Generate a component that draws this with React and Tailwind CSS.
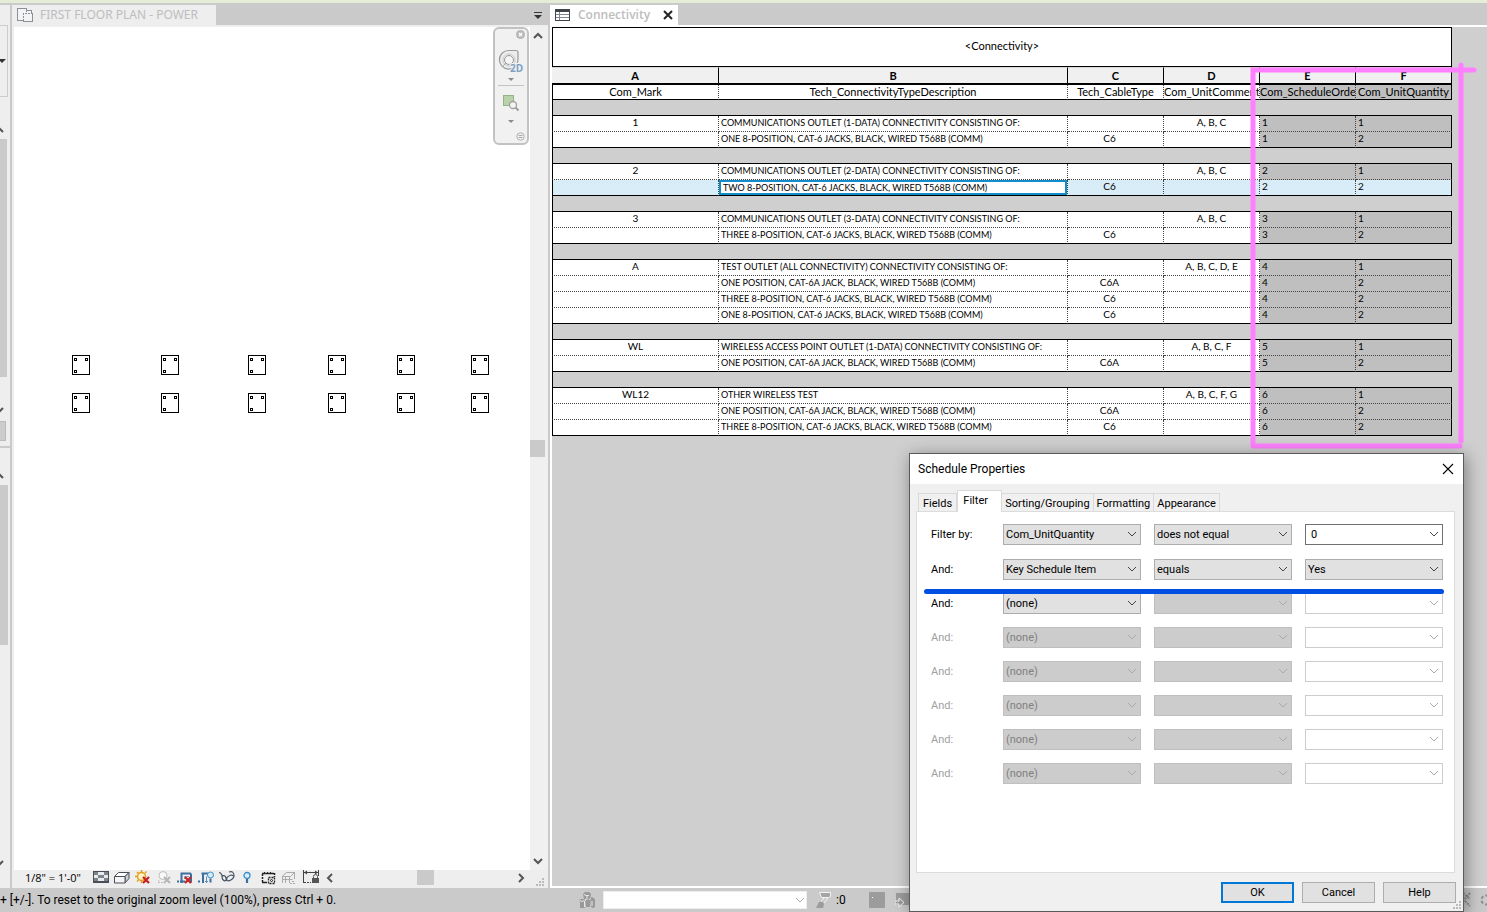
import React, { useState } from 'react';
import clsx from 'clsx';

const FIELDS = [
  { letter: 'A', name: 'Com_Mark' },
  { letter: 'B', name: 'Tech_ConnectivityTypeDescription' },
  { letter: 'C', name: 'Tech_CableType' },
  { letter: 'D', name: 'Com_UnitComment' },
  { letter: 'E', name: 'Com_ScheduleOrde' },
  { letter: 'F', name: 'Com_UnitQuantity' },
];

const GROUPS = [
  [
    ['1', 'COMMUNICATIONS OUTLET (1-DATA) CONNECTIVITY CONSISTING OF:', '', 'A, B, C', '1', '1'],
    ['', 'ONE 8-POSITION, CAT-6 JACKS, BLACK, WIRED T568B (COMM)', 'C6', '', '1', '2'],
  ],
  [
    ['2', 'COMMUNICATIONS OUTLET (2-DATA) CONNECTIVITY CONSISTING OF:', '', 'A, B, C', '2', '1'],
    ['', 'TWO 8-POSITION, CAT-6 JACKS, BLACK, WIRED T568B (COMM)', 'C6', '', '2', '2'],
  ],
  [
    ['3', 'COMMUNICATIONS OUTLET (3-DATA) CONNECTIVITY CONSISTING OF:', '', 'A, B, C', '3', '1'],
    ['', 'THREE 8-POSITION, CAT-6 JACKS, BLACK, WIRED T568B (COMM)', 'C6', '', '3', '2'],
  ],
  [
    ['A', 'TEST OUTLET (ALL CONNECTIVITY) CONNECTIVITY CONSISTING OF:', '', 'A, B, C, D, E', '4', '1'],
    ['', 'ONE POSITION, CAT-6A JACK, BLACK, WIRED T568B (COMM)', 'C6A', '', '4', '2'],
    ['', 'THREE 8-POSITION, CAT-6 JACKS, BLACK, WIRED T568B (COMM)', 'C6', '', '4', '2'],
    ['', 'ONE 8-POSITION, CAT-6 JACKS, BLACK, WIRED T568B (COMM)', 'C6', '', '4', '2'],
  ],
  [
    ['WL', 'WIRELESS ACCESS POINT OUTLET (1-DATA) CONNECTIVITY CONSISTING OF:', '', 'A, B, C, F', '5', '1'],
    ['', 'ONE POSITION, CAT-6A JACK, BLACK, WIRED T568B (COMM)', 'C6A', '', '5', '2'],
  ],
  [
    ['WL12', 'OTHER WIRELESS TEST', '', 'A, B, C, F, G', '6', '1'],
    ['', 'ONE POSITION, CAT-6A JACK, BLACK, WIRED T568B (COMM)', 'C6A', '', '6', '2'],
    ['', 'THREE 8-POSITION, CAT-6 JACKS, BLACK, WIRED T568B (COMM)', 'C6', '', '6', '2'],
  ],
];

const OUTLETS = [58, 147, 234, 314, 383, 457];

const FILTERS = [
  { label: 'Filter by:', field: 'Com_UnitQuantity', rule: 'does not equal', value: '0', editable: true },
  { label: 'And:', field: 'Key Schedule Item', rule: 'equals', value: 'Yes' },
  { label: 'And:', field: '(none)' },
  { label: 'And:', field: '(none)', disabled: true },
  { label: 'And:', field: '(none)', disabled: true },
  { label: 'And:', field: '(none)', disabled: true },
  { label: 'And:', field: '(none)', disabled: true },
  { label: 'And:', field: '(none)', disabled: true },
];

const Chevron = ({ dir = 'down', className }) => {
  const paths = {
    down: 'M1 3l4 4 4-4',
    up: 'M1 7l4-4 4 4',
    left: 'M7 1L3 5l4 4',
    right: 'M3 1l4 4-4 4',
  };
  return (
    <svg viewBox="0 0 10 10" className={clsx('w-2.5 h-2.5 shrink-0', className)} fill="none" stroke="currentColor">
      <path d={paths[dir]} />
    </svg>
  );
};

const Palette = () => (
  <aside className="w-3 shrink-0 flex flex-col items-start bg-[#eeeeee] border-r-2 border-[#cacaca] overflow-hidden text-[#555555]">
    <div className="mt-5 w-2 h-[72px] shrink-0 border border-l-0 border-[#cccccc] flex items-center">
      <svg viewBox="0 0 6 4" className="w-1.5 h-1 shrink-0"><path d="M0 0h6L2 4 0 2z" fill="#333" /></svg>
    </div>
    <div className="h-[42px] shrink-0 flex items-end pb-1">
      <Chevron dir="up" className="-ml-1.5 stroke-2" />
    </div>
    <div className="w-[7px] h-[238px] shrink-0 bg-[#cacaca]" />
    <div className="h-11 shrink-0 flex items-end pb-1.5">
      <Chevron className="-ml-1.5 stroke-2" />
    </div>
    <div className="w-1.5 h-5 shrink-0 bg-[#cccccc] border border-l-0 border-[#bbbbbb]" />
    <div className="mt-[5px] w-full h-0.5 shrink-0 bg-[#cacaca]" />
    <div className="h-[37px] shrink-0 flex items-end pb-1">
      <Chevron dir="up" className="-ml-1.5 stroke-2" />
    </div>
    <div className="w-2 h-[160px] shrink-0 bg-[#cacaca]" />
    <div className="mt-auto pb-5">
      <Chevron className="-ml-1.5 stroke-2" />
    </div>
  </aside>
);

const Outlet = () => (
  <svg viewBox="0 0 18 20" className="w-[18px] h-5" fill="none" stroke="#000" shapeRendering="crispEdges">
    <rect x="0.5" y="0.5" width="17" height="19" />
    <path d="M2.5 3.5h2v2h-2zM13.5 3.5h2v2h-2zM2.5 15.5h2v2h-2z" />
  </svg>
);

const NavigationBar = () => (
  <div className="absolute right-px top-0 w-9 h-[118px] rounded-md border-2 border-[#c2c2c2] bg-[#f1f1f1] flex flex-col items-center">
    <button aria-label="Close navigation bar" className="self-end mr-0.5 mt-px">
      <svg viewBox="0 0 9 9" className="w-[9px] h-[9px]">
        <circle cx="4.5" cy="4.5" r="4" fill="#bdbdbd" stroke="#b0b0b0" />
        <path d="M3 3l3 3M6 3L3 6" stroke="#fff" strokeWidth="1.2" />
      </svg>
    </button>
    <button aria-label="Steering wheel" className="mt-2.5">
      <svg viewBox="0 0 26 26" className="w-[26px] h-[26px]">
        <path d="M11 1.5h7a2 2 0 0 1 2 2V11a9.3 9.3 0 1 1-9-9.5z" fill="#ececec" stroke="#999999" strokeWidth="1.2" />
        <circle cx="11" cy="11" r="6" fill="#f8f8f8" stroke="#c8c8c8" />
        <circle cx="11" cy="11" r="4.5" fill="#f5f5f5" stroke="#929292" />
        <path d="M8 14l-3.5 3.5" stroke="#aaaaaa" />
        <text x="12" y="23" fontSize="10" fontWeight="700" fontFamily="Open Sans, sans-serif" fill="#7ea0c2" stroke="#f1f1f1" strokeWidth="2" paintOrder="stroke">2D</text>
      </svg>
    </button>
    <svg viewBox="0 0 6 3" className="mt-[3px] w-1.5 h-[3px] shrink-0"><path d="M0 0h6L3 3z" fill="#8a8a8a" /></svg>
    <div className="mt-1 w-[26px] border-t border-[#c2c2c2]" />
    <button aria-label="Zoom region" className="mt-2">
      <svg viewBox="0 0 18 18" className="w-[18px] h-[18px]">
        <rect x="1.5" y="1.5" width="10" height="10" fill="#b9d2aa" stroke="#93b583" />
        <path d="M13.5 13.5l3 3" stroke="#999" strokeWidth="1.8" />
        <circle cx="11" cy="11" r="3.5" fill="#f4f4f4" stroke="#a0a0a0" strokeWidth="1.3" />
      </svg>
    </button>
    <svg viewBox="0 0 6 3" className="mt-2 w-1.5 h-[3px] shrink-0"><path d="M0 0h6L3 3z" fill="#8a8a8a" /></svg>
    <button aria-label="Navigation bar options" className="self-end mr-0.5 mt-auto mb-0.5">
      <svg viewBox="0 0 9 9" className="w-[9px] h-[9px]">
        <circle cx="4.5" cy="4.5" r="3.7" fill="#f1f1f1" stroke="#b0b0b0" />
        <path d="M2.5 3.5h4M2.5 5.5h4" stroke="#a8a8a8" />
      </svg>
    </button>
  </div>
);

const VIEW_TOOLS = [
  {
    name: 'Detail level',
    art: (
      <g shapeRendering="crispEdges">
        <rect x="0.5" y="1.5" width="15" height="11" fill="#e8ebee" stroke="#4a4f57" />
        <path d="M1 2h4v3H1zM11 2h4v3h-4zM5 5h6v3H5zM1 8h4v3H1zM11 8h4v3h-4z" fill="#7d848c" />
        <path d="M1 11.5h14" stroke="#4a4f57" />
      </g>
    ),
  },
  {
    name: 'Visual style',
    art: (
      <g stroke="#4a4f57" strokeLinejoin="round">
        <path d="M0.500 6.500l4-4h10.500l-4 4z" fill="#fff" />
        <path d="M11 6.500l4-4v6l-4 4.500z" fill="#cdd1d6" />
        <path d="M0.500 6.500H11v6.500H0.500z" fill="#f4f4f4" />
      </g>
    ),
  },
  {
    name: 'Sun path off',
    art: (
      <>
        <circle cx="6.5" cy="6.5" r="4" fill="#fff3c4" stroke="#e0a020" strokeWidth="1.5" />
        <path d="M6.500 0v2M0 6.500h2M2 2l1.500 1.500M11.500 1.500L10 3M2 11.500L3.500 10M6.500 11v2" stroke="#e0a020" strokeWidth="1.5" />
        <path d="M8 7l6 6M14 7l-6 6" stroke="#c9201f" strokeWidth="2.2" />
      </>
    ),
  },
  {
    name: 'Shadows off',
    art: (
      <g fill="none" stroke="#bdbdbd">
        <circle cx="7" cy="5.500" r="4" fill="#f8f8f8" />
        <path d="M2 12.500h7M2 10l2 2" strokeDasharray="2 1" />
        <path d="M8 7l6 6M14 7l-6 6" stroke="#b4b4b4" strokeWidth="1.8" />
      </g>
    ),
  },
  {
    name: 'Crop view off',
    art: (
      <>
        <path d="M0 11.500h2M14 3.500v9" fill="none" stroke="#3c6f9e" strokeWidth="2" />
        <path d="M4.500 13V3.500H14M3 11.500h5" fill="none" stroke="#3c6f9e" strokeWidth="2" />
        <path d="M7.500 9V6.500H12" fill="none" stroke="#7fa6c8" />
        <path d="M8 7l6 6M14 7l-6 6" stroke="#c9201f" strokeWidth="2.2" />
      </>
    ),
  },
  {
    name: 'Show crop region',
    art: (
      <>
        <path d="M0 11.500h2M5 13V3M3.500 3.500H10M4 11.500h2" fill="none" stroke="#3c6f9e" strokeWidth="2" />
        <path d="M8.500 13V6.500M7 11.500h3" fill="none" stroke="#5f8fb8" />
        <circle cx="12.5" cy="5" r="3" fill="#d5ecfb" stroke="#3f8cc4" />
        <path d="M12.500 8.500v4" stroke="#3c6f9e" strokeWidth="2" />
      </>
    ),
  },
  {
    name: 'Temporary hide/isolate',
    art: (
      <g fill="#e9f2f7" stroke="#48525c" strokeWidth="1.2">
        <path d="M0 2.500c3 0 2 3 4 4M10 2c3-1 5 0 5 4" fill="none" />
        <path d="M3 6.500c2-2 5 0 4 4-2 1-4-1-4-4zM7.500 8.500c2-4 6-4 7.500-2-1 3-5 5-7 4z" />
      </g>
    ),
  },
  {
    name: 'Reveal hidden elements',
    art: (
      <>
        <circle cx="7" cy="5.500" r="3" fill="#d9effc" stroke="#3c8cc8" strokeWidth="1.3" />
        <path d="M7 9v4" stroke="#3c6f9e" strokeWidth="2.2" />
      </>
    ),
  },
  {
    name: 'Worksharing display off',
    art: (
      <g fill="none" stroke="#222">
        <path d="M1 3.500h12M1 12.500h5" strokeWidth="1.5" />
        <path d="M1.500 4v9M13.500 3v4" strokeDasharray="2 1" strokeWidth="1.5" />
        <path d="M3.500 2v2M6.500 2v2M9.500 2v2" />
        <rect x="7.5" y="7.5" width="6" height="6" strokeDasharray="2 1" strokeWidth="1.3" />
        <circle cx="10.5" cy="10.5" r="1" />
      </g>
    ),
  },
  {
    name: 'Analytical model',
    art: (
      <g fill="none" stroke="#aaaaaa">
        <path d="M0.500 13V6l4-3.500h8.500M0.500 6.500h8l4-4M3.500 13V6.500M7.500 13V6.500M0.500 9.500h10M12.500 2v7" />
        <path d="M8 13.500h6M10 11.500h3" strokeDasharray="2 1" />
      </g>
    ),
  },
  {
    name: 'Reveal constraints',
    art: (
      <>
        <path d="M0.500 0v13M15.500 0v6" stroke="#444" />
        <path d="M1 2.500h14" stroke="#444" />
        <path d="M1 12.500h7" stroke="#444" strokeDasharray="2 1" />
        <path d="M1 2.500l3-2v4zM15 2.500l-3-2v4z" fill="#444" />
        <path d="M10.500 8V6.500a2 2 0 0 1 4 0V8" fill="none" stroke="#555" />
        <rect x="9" y="8" width="7" height="5" fill="#555" />
      </>
    ),
  },
];

const Grip = ({ className }) => (
  <svg viewBox="0 0 9 9" className={clsx('w-[9px] h-[9px]', className)} fill="#bbbbbb">
    <path d="M7 1h2v2H7zM4 4h2v2H4zM7 4h2v2H7zM1 7h2v2H1zM4 7h2v2H4zM7 7h2v2H7z" />
  </svg>
);

const FloorPlanView = () => (
  <section className="w-[536px] shrink-0 flex flex-col bg-[#eeeeee]">
    <div className="h-5 flex items-center bg-[#cacaca]">
      <div className="h-full w-[204px] flex items-center gap-[7px] pl-[5px] bg-[#eeeeee]">
        <svg viewBox="0 0 16 14" className="w-4 h-3.5" stroke="#8c8f94" fill="#f3f4f6" shapeRendering="crispEdges">
          <path d="M0.5 0.5h9v1.5h5v3h1v8.5h-9v-1h-6z" />
          <path d="M6.5 13V5.5h9M9.5 2v3.5" strokeDasharray="2 1" fill="none" />
        </svg>
        <span className="font-['Noto_Sans','Open_Sans',sans-serif] text-[12px] leading-4 text-[#bdbdbd] whitespace-nowrap">FIRST FLOOR PLAN - POWER</span>
      </div>
      <button aria-label="Tab list" className="ml-auto mr-1.5">
        <svg viewBox="0 0 8 7" className="w-2 h-[7px]" fill="#333"><path d="M0 0h8v1H0zM0 3h8L4 7z" /></svg>
      </button>
    </div>
    <div className="flex-1 min-h-0 flex pt-0.5 pl-0.5">
      <div className="relative flex-1 bg-white">
        {OUTLETS.map((x) => (
          <div key={x} className="absolute top-[328px] flex flex-col gap-[18px]" style={{ left: x }}>
            <Outlet />
            <Outlet />
          </div>
        ))}
        <NavigationBar />
      </div>
      <div className="w-[18px] flex flex-col items-center bg-[#f0f0f0] text-[#555555]">
        <Chevron dir="up" className="mt-1 mr-0.5 stroke-2" />
        <div className="mt-[399px] mr-[3px] w-[15px] h-[17px] bg-[#cacaca]" />
        <Chevron className="mt-auto mb-1 mr-0.5 stroke-2" />
      </div>
    </div>
    <div className="h-[18px] flex items-start pl-[13px]">
      <span className="w-[68px] text-[11px] leading-4 whitespace-nowrap font-['Open_Sans','Noto_Sans',sans-serif]">1/8" = 1'-0"</span>
      <div className="flex gap-[5px]">
        {VIEW_TOOLS.map((tool) => (
          <button key={tool.name} aria-label={tool.name}>
            <svg viewBox="0 0 16 16" className="w-4 h-4">{tool.art}</svg>
          </button>
        ))}
      </div>
      <div className="flex-1 h-full flex items-center pl-1.5 text-[#555555]">
        <Chevron dir="left" className="mb-0.5 stroke-2" />
        <div className="ml-[82px] self-start w-[17px] h-[15px] bg-[#cacaca]" />
        <Chevron dir="right" className="mb-0.5 ml-auto mr-[9px] stroke-2" />
        <Grip className="mt-1 mr-1" />
      </div>
    </div>
  </section>
);

const cellAlign = ['text-center', 'text-left', 'text-center', 'text-center', 'text-left', 'text-left'];

const ScheduleTable = () => (
  <table className="w-[900px] table-fixed border-separate border-spacing-0 font-[Lato,Carlito,sans-serif] text-[10px] leading-[13px] text-black">
    <caption className="h-10 bg-white border border-black text-center text-[11px] leading-9">&lt;Connectivity&gt;</caption>
    <colgroup>
      <col className="w-[167px]" />
      <col className="w-[349px]" />
      <col className="w-24" />
      <col className="w-24" />
      <col className="w-24" />
      <col className="w-24" />
    </colgroup>
    <thead>
      <tr className="h-[18px]">
        {FIELDS.map((f) => (
          <th key={f.letter} className="p-0 bg-[#f0f0f0] border-t border-t-[#d8d8d8] border-r border-r-black border-b-2 border-b-black text-[11px] leading-[14px] font-bold">
            {f.letter}
          </th>
        ))}
      </tr>
      <tr className="h-[15px]">
        {FIELDS.map((f, i) => (
          <th
            key={f.name}
            className={clsx(
              'p-0 border-b border-b-black border-r text-[11px] leading-[14px] font-normal whitespace-nowrap overflow-hidden',
              i === 0 && 'border-l border-l-black',
              i === 5 ? 'border-r-black' : 'border-r-[#444444] [border-right-style:dotted]',
              i > 3 ? 'bg-[#bfbfbf]' : 'bg-white',
            )}
          >
            {f.name}
          </th>
        ))}
      </tr>
    </thead>
    {GROUPS.map((rows, g) => (
      <tbody key={g}>
        <tr className="h-4">
          <td colSpan={6} className="p-0 h-4 border-l border-b border-black" />
        </tr>
        {rows.map((row, r) => {
          const selected = g === 1 && r === 1;
          const last = r === rows.length - 1;
          return (
            <tr key={r} className="h-4">
              {row.map((text, i) => (
                <td
                  key={i}
                  className={clsx(
                    'p-0 h-4 align-top border-r border-b whitespace-nowrap overflow-hidden',
                    cellAlign[i],
                    i === 0 && 'border-l border-l-black',
                    i === 1 && 'text-[9px] leading-[14px]',
                    i === 2 && 'pr-3',
                    i === 5 ? 'border-r-black' : 'border-r-[#444444] [border-right-style:dotted]',
                    last ? 'border-b-black' : 'border-b-[#444444] [border-bottom-style:dotted]',
                    selected ? 'bg-[#d9edf9]' : i > 3 ? 'bg-[#bfbfbf]' : 'bg-white',
                    (i === 1 || i > 3) && !(selected && i === 1) && 'pl-0.5',
                  )}
                >
                  {selected && i === 1 ? (
                    <div className="h-[15px] leading-3 pl-0.5 bg-white border-2 border-[#118dc9]">{text}</div>
                  ) : (
                    text
                  )}
                </td>
              ))}
            </tr>
          );
        })}
      </tbody>
    ))}
  </table>
);

const ScheduleView = () => (
  <section className="flex-1 min-w-0 flex flex-col border-l-2 border-[#cacaca]">
    <div className="h-5 flex bg-[#cacaca]">
      <div className="w-32 flex items-center bg-white pl-[5px] pr-1">
        <svg viewBox="0 0 15 12" className="w-[15px] h-3" shapeRendering="crispEdges">
          <rect x="0.5" y="0.5" width="14" height="11" fill="#fff" stroke="#3f444c" />
          <path d="M0 0h15v3H0z" fill="#3f444c" />
          <path d="M1 5.5h13M1 8.5h13M4.5 3v8" stroke="#7f8791" />
        </svg>
        <span className="ml-2 font-['Open_Sans','Noto_Sans',sans-serif] text-[12px] leading-4 font-semibold text-[#bdbdbd]">Connectivity</span>
        <button aria-label="Close tab" className="ml-auto">
          <svg viewBox="0 0 12 12" className="w-3 h-3" stroke="#222" strokeWidth="2"><path d="M2 2l8 8M10 2l-8 8" /></svg>
        </button>
      </div>
    </div>
    <div className="flex-1 min-h-0 border-t-2 border-l-2 border-b-2 border-white bg-[#cfcfcf]">
      <div className="relative w-[900px]">
        <ScheduleTable />
        <svg viewBox="0 0 930 390" className="absolute left-0 top-[34px] w-[930px] h-[390px] pointer-events-none" fill="none" stroke="#ff80ff" strokeWidth="5" strokeLinecap="round">
          <path d="M701 385V9H922M909 4V380M701 385H908" />
        </svg>
      </div>
    </div>
  </section>
);

const StatusBar = () => (
  <footer className="h-6 shrink-0 flex items-center bg-[#cacaca] whitespace-nowrap overflow-hidden">
    <span className="w-[579px] shrink-0 text-[12px] leading-4">+ [+/-]. To reset to the original zoom level (100%), press Ctrl + 0.</span>
    <svg viewBox="0 0 16 16" className="w-4 h-4 shrink-0" fill="#999999">
      <path d="M4 2l2-2h4l2 2-1 5H5zM0 8l2-1h3l1 1v8H1V9zM6 8l5-1v8H7zM11 6l2-1 3 2v8l-2 1-2-1z" />
      <path d="M5 2.500l2 1h3M8 4v3M1 8.500l2 1 2-1M5.500 9v6M11.500 6l-1 2M13 9v5M7 7l-1 2" fill="none" stroke="#f0f0f0" strokeWidth="0.9" />
    </svg>
    <select aria-label="Active workset" className="ml-2 w-[204px] h-[18px] shrink-0 appearance-none bg-white border border-[#eeeeee]" />
    <Chevron className="-ml-3 mr-2 text-[#aaaaaa]" />
    <svg viewBox="0 0 16 16" className="ml-[3px] w-4 h-4 shrink-0" fill="#9c9c9c" stroke="#f4f4f4">
      <path d="M0 16l3-6 3-1 2 3-1 4z" stroke="none" />
      <path d="M3.500 0.500h11v4l-2 1h-7zM8 6l-3 4M12 6l-4 5" fill="#a5a5a5" />
    </svg>
    <span className="ml-1 w-[33px] text-[12px] leading-4">:0</span>
    <svg viewBox="0 0 16 16" className="w-4 h-4 shrink-0" fill="#9c9c9c"><rect width="16" height="16" rx="1" /><path d="M3 5h1v1H3z" fill="#fff" /></svg>
    <svg viewBox="0 0 16 16" className="ml-2.5 w-4 h-4 shrink-0" fill="#9c9c9c">
      <path d="M1 1h15v12H1z" />
      <path d="M0 9h4V6l5 4.500L4 15v-3H0z" stroke="#f4f4f4" />
    </svg>
    <svg viewBox="0 0 28 16" className="ml-auto w-7 h-4 shrink-0" fill="none" stroke="#909090" strokeWidth="2">
      <path d="M4 1l7 6M11 1L4 9M6 9l5 5" strokeDasharray="2 1" />
      <circle cx="27" cy="8" r="4.5" strokeDasharray="3 2" />
    </svg>
  </footer>
);

const Combo = ({ label, value = '', disabled, editable }) => {
  const box = clsx(
    'block w-[138px] h-[21px] border text-[11px] leading-4',
    editable && (disabled ? 'pl-1.5 bg-white border-[#cccccc]' : 'pl-[5px] bg-white border-[#707070]'),
    !editable && (disabled ? 'px-0.5 bg-[#cccccc] border-[#bfbfbf] text-[#808080]' : 'px-0.5 bg-[#e1e1e1] border-[#adadad] text-black'),
  );
  return (
    <div className="relative">
      {editable ? (
        <input type="text" aria-label={label} defaultValue={value} disabled={disabled} className={box} />
      ) : (
        <select aria-label={label} disabled={disabled} className={clsx(box, 'appearance-none opacity-100')}>
          <option>{value}</option>
        </select>
      )}
      <Chevron className={clsx('absolute right-1 top-[5px] pointer-events-none', disabled ? 'text-[#aaaaaa]' : 'text-[#444444]')} />
    </div>
  );
};

const TABS = ['Fields', 'Filter', 'Sorting/Grouping', 'Formatting', 'Appearance'];

const ScheduleProperties = () => {
  const [tab, setTab] = useState('Filter');

  return (
    <div role="dialog" aria-label="Schedule Properties" className="absolute right-[23px] top-[453px] w-[555px] h-[459px] flex flex-col bg-[#f0f0f0] border border-[#5a5a5a] shadow-[2px_3px_16px_rgba(0,0,0,0.4)] text-[11px] leading-4 text-black">
      <div className="h-[30px] shrink-0 flex items-center pl-2 pr-[9px] bg-white">
        <h2 className="text-[12px]">Schedule Properties</h2>
        <button aria-label="Close" className="ml-auto">
          <svg viewBox="0 0 12 12" className="w-3 h-3" stroke="#000" strokeWidth="1.1"><path d="M1 1l10 10M11 1L1 11" /></svg>
        </button>
      </div>
      <div className="h-[27px] shrink-0 flex items-end pl-2">
        {TABS.map((t) => (
          <button
            key={t}
            onClick={() => setTab(t)}
            className={clsx(
              'border border-b-0 border-[#d9d9d9]',
              t === tab ? 'relative -mb-px h-[22px] w-[45px] pb-0.5 pr-2 bg-white' : 'h-[18px] pt-0.5 px-[3px] first:px-1 border-l-0 first:border-l bg-[#f0f0f0]',
            )}
          >
            {t}
          </button>
        ))}
      </div>
      <div className="flex-1 mx-[6px] mr-2 bg-white border border-[#dcdcdc] pt-3 pl-3.5">
        <div className="relative flex flex-col gap-[13px]">
          {FILTERS.map((f, i) => (
            <div key={i} className={clsx('flex items-center', i === 0 && 'mb-px')}>
              <span className={clsx('w-[72px]', f.disabled && 'text-[#a0a0a0]')}>{f.label}</span>
              <div className="flex gap-[13px]">
                <Combo label={`Field ${i + 1}`} value={f.field} disabled={f.disabled} />
                <Combo label={`Rule ${i + 1}`} value={f.rule} disabled={!f.rule} />
                <Combo label={`Value ${i + 1}`} value={f.value} disabled={!f.value} editable={f.editable || !f.value} />
              </div>
            </div>
          ))}
          <div className="absolute -left-[7px] top-[65px] w-[520px] h-[5px] rounded-full bg-[#004fe3]" />
        </div>
      </div>
      <div className="h-[38px] shrink-0 flex items-center justify-end gap-2 pr-[7px]">
        <button className="w-[73px] h-[21px] bg-[#e1e1e1] border-2 border-[#0078d7] leading-none">OK</button>
        <button className="w-[73px] h-[21px] bg-[#e1e1e1] border border-[#adadad] leading-none">Cancel</button>
        <button className="w-[73px] h-[21px] bg-[#e1e1e1] border border-[#adadad] leading-none">Help</button>
      </div>
      <Grip className="absolute right-0.5 bottom-0.5" />
    </div>
  );
};

const App = () => (
  <div className="relative h-screen w-full flex flex-col overflow-hidden bg-[#cacaca] font-[Roboto,'Noto_Sans',sans-serif] text-black">
    <div className="h-[5px] shrink-0 bg-[#e4edd5] border-b-2 border-[#cacaca]" />
    <main className="flex-1 min-h-0 flex">
      <Palette />
      <FloorPlanView />
      <ScheduleView />
    </main>
    <StatusBar />
    <ScheduleProperties />
  </div>
);

export default App;
